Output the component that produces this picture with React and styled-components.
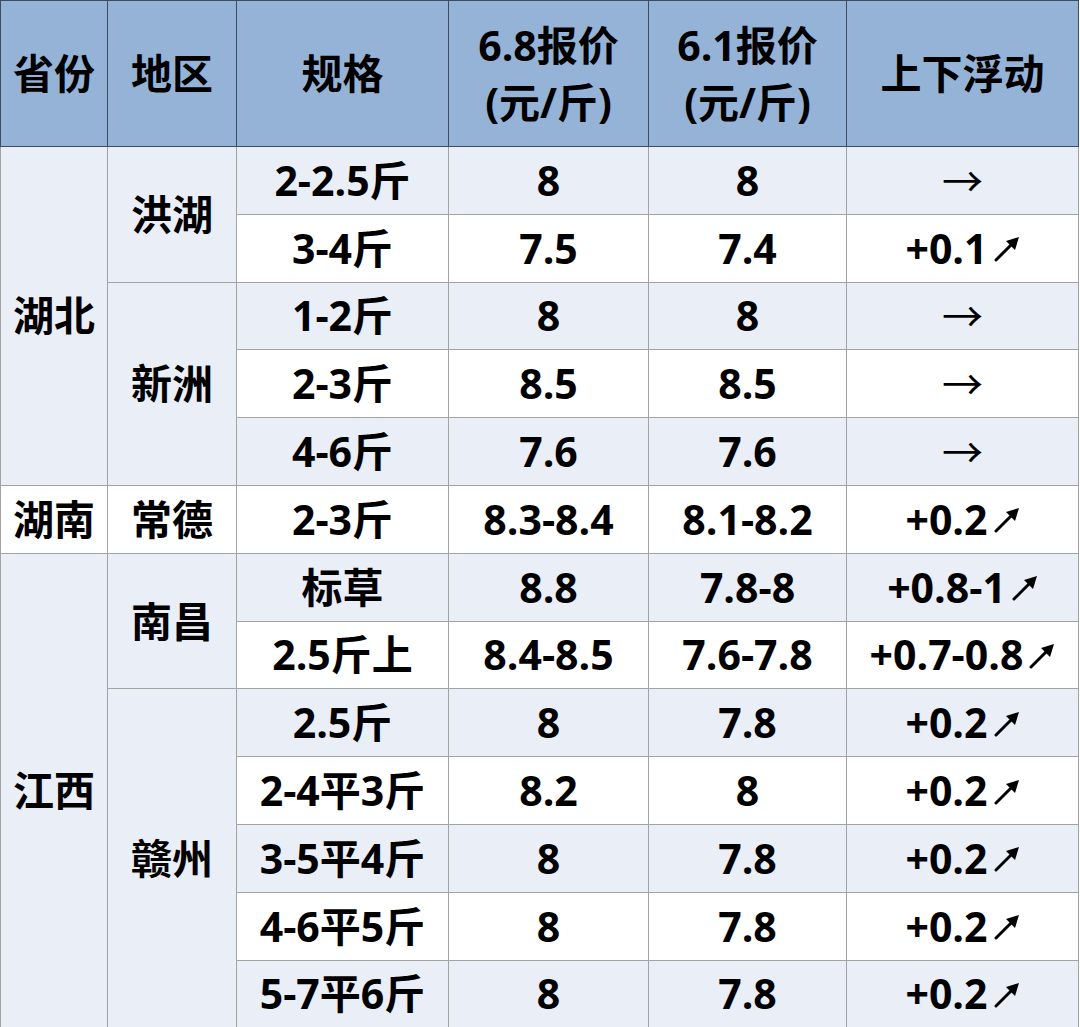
import React from 'react';
import styled, { createGlobalStyle } from 'styled-components';

const GlobalStyle = createGlobalStyle`
  html, body {
    margin: 0;
    padding: 0;
    background: #ffffff;
  }
`;

const COLS = [107, 129, 212, 200, 198, 232];

const HEAD = ['省份', '地区', '规格', '6.8报价\n(元/斤)', '6.1报价\n(元/斤)', '上下浮动'];

// merged cells carry [text, rowSpan]; up = rising price arrow
const ROWS = [
  { prov: ['湖北', 5], area: ['洪湖', 2], spec: '2-2.5斤', a: '8', b: '8', d: '→' },
  { spec: '3-4斤', a: '7.5', b: '7.4', d: '+0.1', up: true },
  { area: ['新洲', 3], spec: '1-2斤', a: '8', b: '8', d: '→' },
  { spec: '2-3斤', a: '8.5', b: '8.5', d: '→' },
  { spec: '4-6斤', a: '7.6', b: '7.6', d: '→' },
  { prov: ['湖南', 1], area: ['常德', 1], spec: '2-3斤', a: '8.3-8.4', b: '8.1-8.2', d: '+0.2', up: true },
  { prov: ['江西', 7], area: ['南昌', 2], spec: '标草', a: '8.8', b: '7.8-8', d: '+0.8-1', up: true },
  { spec: '2.5斤上', a: '8.4-8.5', b: '7.6-7.8', d: '+0.7-0.8', up: true },
  { area: ['赣州', 5], spec: '2.5斤', a: '8', b: '7.8', d: '+0.2', up: true },
  { spec: '2-4平3斤', a: '8.2', b: '8', d: '+0.2', up: true },
  { spec: '3-5平4斤', a: '8', b: '7.8', d: '+0.2', up: true },
  { spec: '4-6平5斤', a: '8', b: '7.8', d: '+0.2', up: true },
  { spec: '5-7平6斤', a: '8', b: '7.8', d: '+0.2', up: true },
];

const UpArrow = () => (
  <ArrowIcon viewBox="0 0 26 26" width="26" height="26">
    <line x1="2" y1="24" x2="18" y2="8" stroke="#000" strokeWidth="3" strokeLinecap="round" />
    <polygon points="25,1 12,5 21,14" fill="#000" />
  </ArrowIcon>
);

const PriceTable = () => (
  <>
    <GlobalStyle />
    <Table>
      <colgroup>
        {COLS.map((w, i) => (
          <col key={i} style={{ width: w }} />
        ))}
      </colgroup>
      <thead>
        <HeadRow>
          {HEAD.map((h, i) => (
            <HeadCell key={i}>{h}</HeadCell>
          ))}
        </HeadRow>
      </thead>
      <tbody>
        {ROWS.map((r, i) => {
          const shade = i % 2 === 0;
          return (
            <BodyRow key={i}>
              {r.prov && (
                <Cell rowSpan={r.prov[1]} $shade={shade}>{r.prov[0]}</Cell>
              )}
              {r.area && (
                <Cell rowSpan={r.area[1]} $shade={shade}>{r.area[0]}</Cell>
              )}
              <Cell $shade={shade}>{r.spec}</Cell>
              <Cell $shade={shade}>{r.a}</Cell>
              <Cell $shade={shade}>{r.b}</Cell>
              <Cell $shade={shade}>
                <Change $flat={!r.up}>
                  {r.d}
                  {r.up && <UpArrow />}
                </Change>
              </Cell>
            </BodyRow>
          );
        })}
      </tbody>
    </Table>
  </>
);

export default PriceTable;

const Table = styled.table`
  border-collapse: collapse;
  table-layout: fixed;
  width: 1078px;
  font-family: "Open Sans", "Noto Sans CJK SC", sans-serif;
  font-weight: 700;
  font-size: 41px;
  color: #000000;
`;

const HeadRow = styled.tr`
  height: 146px;
`;

const HeadCell = styled.th`
  background: #95b3d7;
  border: 1px solid #3e4c61;
  text-align: center;
  vertical-align: middle;
  white-space: pre-line;
  line-height: 57px;
  font-weight: 700;
  padding: 0;
`;

const BodyRow = styled.tr`
  height: 67.8px;
`;

const Cell = styled.td`
  background: ${(p) => (p.$shade ? '#e9eef7' : '#ffffff')};
  border: 1px solid #a3a3a3;
  text-align: center;
  vertical-align: middle;
  padding: 0;
  line-height: 1;
  white-space: nowrap;
`;

const Change = styled.span`
  display: inline-flex;
  align-items: center;
  gap: 6px;
  font-weight: ${(p) => (p.$flat ? 400 : 700)};
  font-family: ${(p) => (p.$flat ? '"Noto Sans CJK SC", sans-serif' : 'inherit')};
`;

const ArrowIcon = styled.svg`
  flex: none;
  margin-top: 2px;
`;
